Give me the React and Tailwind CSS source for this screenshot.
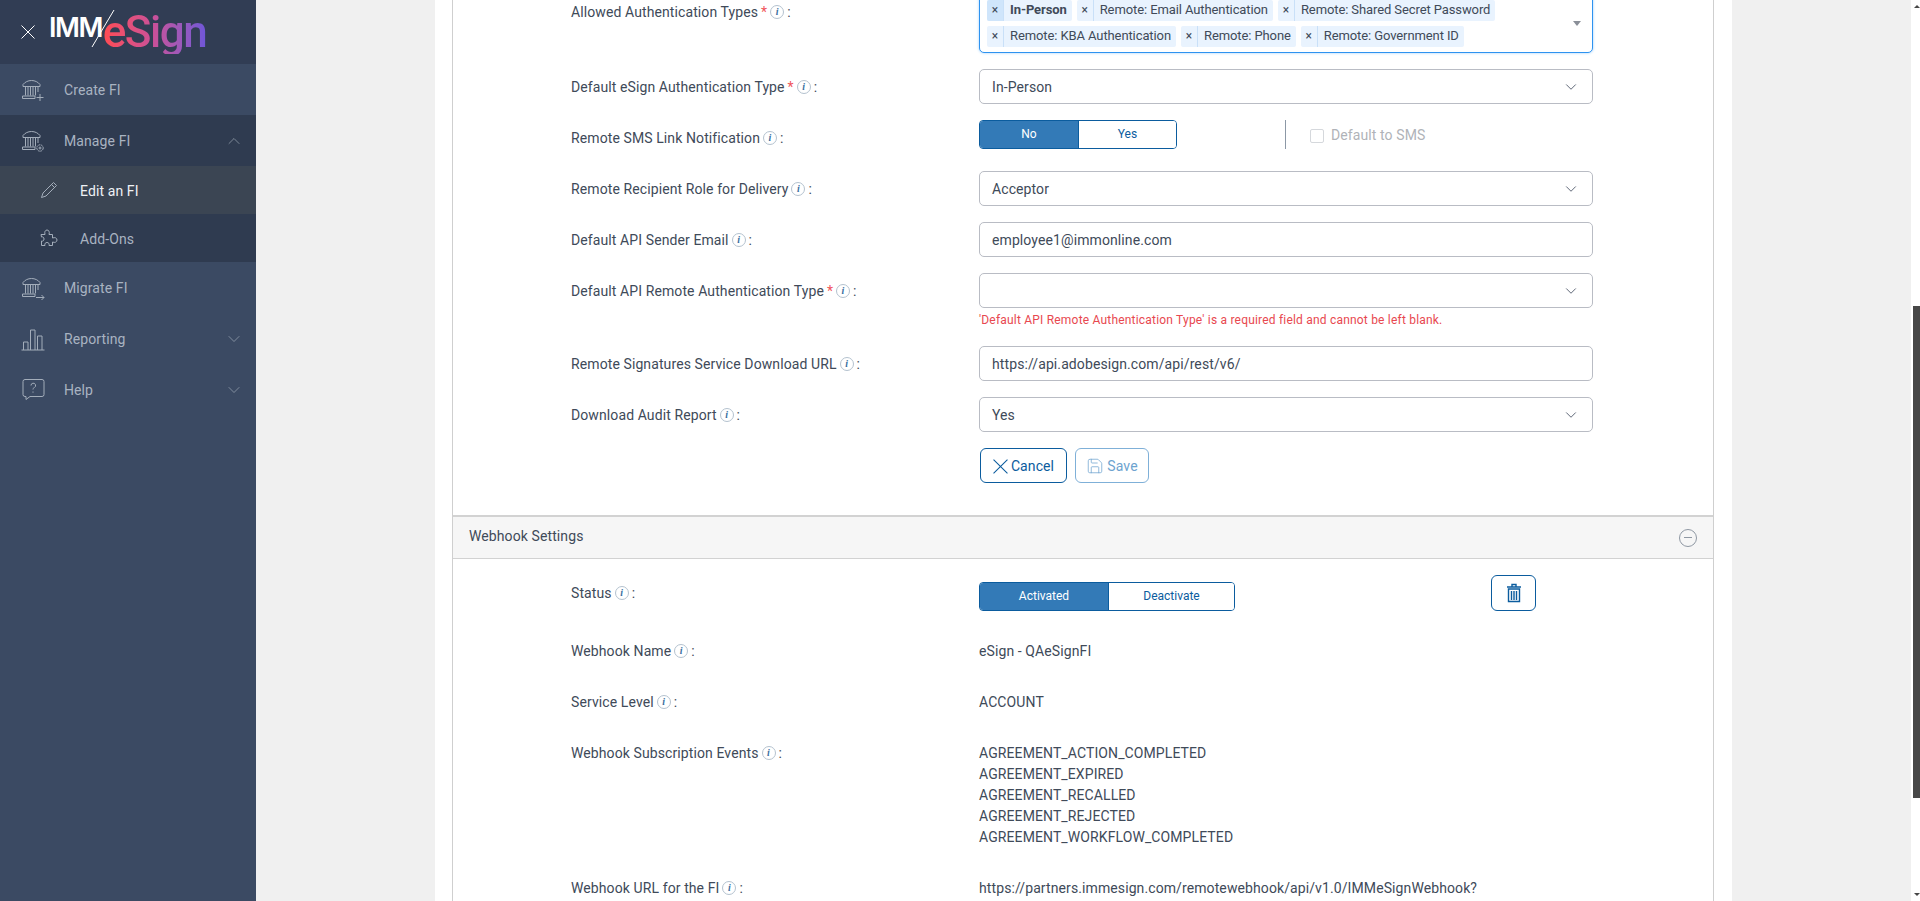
import { ChevronDown, ChevronUp, Save } from 'lucide-react';

function Cross({ size, color, width = 1 }) {
    return (
        <svg width={size} height={size} viewBox="0 0 14 14" fill="none" stroke={color} strokeWidth={width} className="shrink-0">
            <path d="M.5.5l13 13M13.5.5l-13 13" />
        </svg>
    );
}

function Bank({ children }) {
    return (
        <svg width="24" height="24" viewBox="0 0 24 24" fill="none" stroke="#a3adba" strokeWidth="1" className="shrink-0">
            <path d="M2 6.500C4 4 7 2.500 10.500 2.500S17 4 19 6.500V8.500H2z" />
            <path d="M4.500 9v8.500M7 9v8.500M9.500 9v8.500M12 9v8.500M14.500 9v8.500M17 9v5" />
            <path d="M1.500 18h12.500v2.500H1.500z" />
            {children}
        </svg>
    );
}

function NavItem({ icon, label, chevron, dark }) {
    return (
        <div className={`h-[51px] flex items-center pl-[21px] pr-[12px] ${dark ? 'bg-[#2f3b50]' : 'bg-[#3b4a63]'}`}>
            <div className="w-[43px] flex items-center">{icon}</div>
            <span className="text-[14px] tracking-[0.1px] pt-[2px] text-[#a9b3c1]">{label}</span>
            {chevron === 'up' && <ChevronUp size={20} strokeWidth={0.8} color="#a3adba" className="ml-auto" />}
            {chevron === 'down' && <ChevronDown size={20} strokeWidth={0.8} color="#a3adba" className="ml-auto" />}
        </div>
    );
}

function SubItem({ icon, label, active }) {
    return (
        <div className={`h-[48px] flex items-center pl-[40px] ${active ? 'bg-[#3b4553]' : 'bg-[#2f3b50]'}`}>
            <div className="w-[40px] flex items-center">{icon}</div>
            <span className={`text-[14px] tracking-[0.1px] pt-[2px] ${active ? 'text-[#eef1f5]' : 'text-[#a9b3c1]'}`}>{label}</span>
        </div>
    );
}

function Sidebar() {
    return (
        <aside className="w-[256px] shrink-0 h-full bg-[#3b4a63]">
            <div className="h-[64px] bg-[#313d54] flex items-center pl-[21px]">
                <Cross size={14} color="#ffffff" />
                <div className="relative ml-[14px] flex items-baseline">
                    <span className="text-[27px] font-semibold text-white tracking-[-1.5px] -translate-y-[10px] font-['Inter',sans-serif] leading-none">IMM</span>
                    <svg width="26" height="40" viewBox="0 0 26 40" className="absolute left-[41px] top-[-1px]">
                        <line x1="24" y1="1" x2="2" y2="38" stroke="#ffffff" strokeWidth="1" />
                    </svg>
                    <span className="ml-[1px] text-[44px] font-medium leading-none tracking-[-1.5px] text-transparent bg-clip-text bg-gradient-to-r from-[#ff4a50] via-[#c8509a] to-[#6f56d8] font-['Roboto',sans-serif]">eSign</span>
                </div>
            </div>
            <NavItem
                label="Create FI"
                icon={<Bank><path d="M19 16v7M15.500 19.500h7" /></Bank>}
            />
            <NavItem
                dark
                label="Manage FI"
                chevron="up"
                icon={<Bank><circle cx="19" cy="19" r="3.200" fill="#2f3b50" strokeDasharray="2 0.6" /><circle cx="19" cy="19" r="1" /></Bank>}
            />
            <SubItem
                active
                label="Edit an FI"
                icon={
                    <svg width="18" height="18" viewBox="0 0 18 18" fill="none" stroke="#a3adba" strokeWidth="1">
                        <path d="M13.500 1.500l3 3L6 15l-4.500 1.500L3 12z" />
                        <path d="M11.500 3.500l3 3" />
                    </svg>
                }
            />
            <SubItem
                label="Add-Ons"
                icon={
                    <svg width="18" height="18" viewBox="0 0 18 18" fill="none" stroke="#a3adba" strokeWidth="1">
                        <path d="M1 5.500h4c-.8-3 .5-4.500 2-4.500s3 1.500 2 4.500h3.500V9c2.500-1 4.500 0 4.500 2s-2 3-4.500 2v3.500H9c.6-2-.5-3-2-3s-2.600 1-2 3H1.500V12c1.500.5 2.500-.5 2.500-2S3 7.500 1.500 8z" />
                    </svg>
                }
            />
            <NavItem
                label="Migrate FI"
                icon={<Bank><path d="M15 21.500h8M20.500 19l2.500 2.500-2.500 2.500" /></Bank>}
            />
            <NavItem
                label="Reporting"
                chevron="down"
                icon={
                    <svg width="24" height="24" viewBox="0 0 24 24" fill="none" stroke="#a3adba" strokeWidth="1">
                        <path d="M.5 23h23M2.500 23v-8h4.500v8M9.500 23V3h4.500v20M16.500 23V9h4.500v14" />
                    </svg>
                }
            />
            <NavItem
                label="Help"
                chevron="down"
                icon={
                    <svg width="24" height="24" viewBox="0 0 24 24" fill="none" stroke="#a3adba" strokeWidth="1">
                        <path d="M4 1.500h17a2 2 0 0 1 2 2v13a2 2 0 0 1-2 2H9l-4 3v-3H4a2 2 0 0 1-2-2v-13a2 2 0 0 1 2-2z" />
                        <path d="M10 7.500a2.300 2.300 0 1 1 3.400 2c-1 .6-1.400 1-1.400 2M12 13.500v1.200" />
                    </svg>
                }
            />
        </aside>
    );
}

function Info() {
    return (
        <span className="inline-flex items-center justify-center w-[14px] h-[14px] rounded-full border border-[#b4c2cf] ml-[3px] -translate-y-[1px] font-['Liberation_Serif',serif] italic font-bold text-[10px] leading-none text-[#3a6f9f]">i</span>
    );
}

function Label({ text, required, flat }) {
    return (
        <div className={`w-[408px] shrink-0 h-[35px] flex items-center text-[14px] tracking-[0.1px] text-[#404a59] ${flat ? '' : 'pt-[2px]'}`}>
            <span>{text}</span>
            {required && <span className="text-[#f0555b] ml-[3px]">*</span>}
            <Info />
            <span className="ml-[3px]">:</span>
        </div>
    );
}

function Row({ label, required, flat, children, className = 'mb-[16px]' }) {
    return (
        <div className={`flex ${className}`}>
            <Label text={label} required={required} flat={flat} />
            <div className="w-[614px]">{children}</div>
        </div>
    );
}

function Select({ value }) {
    return (
        <div className="h-[35px] rounded-[5px] border border-[#b9bcc4] bg-white flex items-center pl-[12px] pr-[12px] text-[14px] tracking-[0.1px] text-[#404a59]">
            <span className="pt-[2px]">{value}</span>
            <ChevronDown size={18} strokeWidth={1.300} color="#5a6474" className="ml-auto" />
        </div>
    );
}

function Input({ value }) {
    return (
        <div className="h-[35px] rounded-[5px] border border-[#b9bcc4] flex items-center pl-[12px] pt-[2px] text-[14px] tracking-[0.1px] text-[#404a59]">{value}</div>
    );
}

function Plain({ children }) {
    return <div className="h-[35px] flex items-center text-[14px] tracking-[0.1px] text-[#404a59]">{children}</div>;
}

function Chip({ label, active }) {
    return (
        <div className="h-[21px] flex items-center rounded-[2px] text-[13px] tracking-[-0.1px] text-[#404a59] bg-[#e9f3fe]">
            <span className={`w-[17px] h-full flex items-center justify-center border-r border-[#c9e0f8] rounded-l-[2px] text-[12px] pb-[2px] ${active ? 'bg-[#cfe5fb]' : ''}`}>×</span>
            <span className={`pl-[6px] pr-[5px] pb-[2px] ${active ? 'font-bold' : ''}`}>{label}</span>
        </div>
    );
}

function Toggle({ on, off, split, className }) {
    return (
        <div className={`flex rounded-[4px] border border-[#0b5c9e] overflow-hidden text-[12px] h-full ${className}`}>
            <div className={`${split} flex items-center justify-center pb-[1px] bg-[#337ab7] text-white`}>{on}</div>
            <div className="flex-1 flex items-center justify-center pb-[1px] bg-white text-[#0b5c9e] border-l border-[#0b5c9e]">{off}</div>
        </div>
    );
}

function Scrollbar() {
    return (
        <div className="w-[9px] shrink-0 h-full bg-white flex flex-col items-end relative">
            <div className="w-[7px] h-[492px] mt-[306px] bg-[#474747]" />
            <div className="absolute left-[3px] top-[5px] w-0 h-0 border-x-[3px] border-x-transparent border-b-[3px] border-b-[#474747]" />
            <div className="absolute left-[3px] bottom-[5px] w-0 h-0 border-x-[3px] border-x-transparent border-t-[3px] border-t-[#474747]" />
        </div>
    );
}

export default function App() {
    return (
        <div className="w-[1920px] h-[901px] flex overflow-hidden bg-[#f0f0f0] font-['Roboto',sans-serif]">
            <Sidebar />
            <main className="flex-1 h-full overflow-hidden flex justify-center">
                <div className="w-[1297px] shrink-0 h-full bg-white pl-[17px] pr-[18px] overflow-hidden">
                    <div className="h-[1100px] border-x border-[#cfcfcf] -mt-[6px]">
                        <div className="pl-[118px]">
                            <Row label="Allowed Authentication Types" required>
                                <div className="relative h-[59px] rounded-[5px] border border-[#2e93f0] shadow-[0_0_3px_#9fd0fb] bg-white pl-[7px] pt-[5px]">
                                    <div className="flex flex-wrap gap-x-[5px] gap-y-[5px] w-[540px]">
                                        <Chip active label="In-Person" />
                                        <Chip label="Remote: Email Authentication" />
                                        <Chip label="Remote: Shared Secret Password" />
                                        <Chip label="Remote: KBA Authentication" />
                                        <Chip label="Remote: Phone" />
                                        <Chip label="Remote: Government ID" />
                                    </div>
                                    <div className="absolute right-[11px] top-[26px] w-0 h-0 border-x-[4px] border-x-transparent border-t-[5px] border-t-[#8a8f98]" />
                                </div>
                            </Row>
                            <Row label="Default eSign Authentication Type" required>
                                <Select value="In-Person" />
                            </Row>
                            <Row label="Remote SMS Link Notification">
                                <div className="flex h-[29px]">
                                    <Toggle on="No" off="Yes" split="w-[98px]" className="w-[198px]" />
                                    <div className="w-px h-full bg-[#8c98a6] ml-[108px]" />
                                    <div className="ml-[24px] flex items-center gap-[7px] text-[14px] tracking-[0.1px] text-[#b0b3b8] pt-[2px]">
                                        <span className="w-[14px] h-[14px] rounded-[2px] border border-[#d5d8dc]" />
                                        <span>Default to SMS</span>
                                    </div>
                                </div>
                            </Row>
                            <Row label="Remote Recipient Role for Delivery">
                                <Select value="Acceptor" />
                            </Row>
                            <Row label="Default API Sender Email">
                                <Input value="employee1@immonline.com" />
                            </Row>
                            <Row label="Default API Remote Authentication Type" required className="mb-[0px]">
                                <Select value="" />
                                <div className="h-[38px] pt-[4px] text-[12px] tracking-[0.2px] leading-[16px] text-[#e8484f]">'Default API Remote Authentication Type' is a required field and cannot be left blank.</div>
                            </Row>
                            <Row label="Remote Signatures Service Download URL">
                                <Input value="https://api.adobesign.com/api/rest/v6/" />
                            </Row>
                            <Row label="Download Audit Report">
                                <Select value="Yes" />
                            </Row>
                            <div className="flex pl-[408px] gap-[8px] pb-[32px]">
                                <button className="ml-[1px] w-[87px] h-[35px] rounded-[6px] border border-[#0b5c9e] flex items-center justify-center gap-[3px] pt-[1px] text-[14px] tracking-[0.1px] text-[#0b5c9e]">
                                    <Cross size={15} color="#0b5c9e" />
                                    Cancel
                                </button>
                                <button className="w-[74px] h-[35px] rounded-[6px] border border-[#7fb0d8] flex items-center justify-center gap-[3px] pt-[1px] text-[14px] tracking-[0.1px] text-[#6da3cf]">
                                    <Save size={18} strokeWidth={1} />
                                    Save
                                </button>
                            </div>
                        </div>
                        <div className="h-[44px] border-t-2 border-b border-[#d2d2d2] bg-[#f6f6f6] flex items-center pl-[16px] pr-[16px] text-[14px] tracking-[0.1px] text-[#404a59]">
                            <span className="pb-[2px]">Webhook Settings</span>
                            <span className="ml-auto w-[18px] h-[18px] rounded-full border border-[#8f98a3] flex items-center justify-center">
                                <span className="w-[8px] h-[1.500px] bg-[#8f98a3]" />
                            </span>
                        </div>
                        <div className="pl-[118px] pt-[16px]">
                            <div className="flex mb-[23px]">
                                <Label text="Status" />
                                <div className="w-[614px] flex">
                                    <div className="h-[29px] mt-[7px]">
                                        <Toggle on="Activated" off="Deactivate" split="w-[128px]" className="w-[256px]" />
                                    </div>
                                    <button className="ml-[256px] w-[45px] h-[36px] rounded-[6px] border border-[#0b5c9e] flex items-center justify-center">
                                        <svg width="16" height="20" viewBox="0 0 16 20" fill="none" stroke="#0b5c9e" strokeWidth="1.400">
                                            <path d="M1 4h14M6 4V1.500h4V4" />
                                            <path d="M2.500 6h11v12.500h-11z" />
                                            <path d="M5.500 8v9M8 8v9M10.500 8v9" />
                                        </svg>
                                    </button>
                                </div>
                            </div>
                            <Row label="Webhook Name" flat>
                                <Plain>eSign - QAeSignFI</Plain>
                            </Row>
                            <Row label="Service Level" flat>
                                <Plain>ACCOUNT</Plain>
                            </Row>
                            <Row label="Webhook Subscription Events" flat>
                                <div className="py-[7px] text-[14px] tracking-[0.1px] leading-[21px] text-[#404a59]">
                                    <div>AGREEMENT_ACTION_COMPLETED</div>
                                    <div>AGREEMENT_EXPIRED</div>
                                    <div>AGREEMENT_RECALLED</div>
                                    <div>AGREEMENT_REJECTED</div>
                                    <div>AGREEMENT_WORKFLOW_COMPLETED</div>
                                </div>
                            </Row>
                            <Row label="Webhook URL for the FI" flat>
                                <Plain>https://partners.immesign.com/remotewebhook/api/v1.0/IMMeSignWebhook?</Plain>
                            </Row>
                        </div>
                    </div>
                </div>
            </main>
            <Scrollbar />
        </div>
    );
}
